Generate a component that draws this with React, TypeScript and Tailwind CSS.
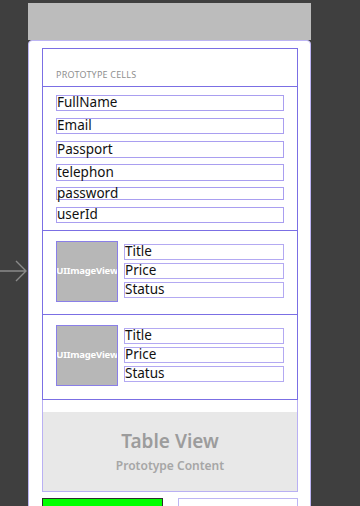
const fields = [
  { label: "FullName", mt: "mt-[8px]", h: "h-[16px]" },
  { label: "Email", mt: "mt-[7px]", h: "h-[16px]" },
  { label: "Passport", mt: "mt-[7px]", h: "h-[17px]" },
  { label: "telephon", mt: "mt-[6px]", h: "h-[17px]" },
  { label: "password", mt: "mt-[6px]", h: "h-[13px]" },
  { label: "userId", mt: "mt-[7px]", h: "h-[16px]" },
];

function ProductCell({ last }: { last?: boolean }) {
  return (
    <div
      className={
        last
          ? "flex h-[84px] items-start gap-[6px] pl-[13px] pt-[10px]"
          : "flex h-[84px] items-start gap-[6px] border-b border-[#7b6fe4] pl-[13px] pt-[10px]"
      }
    >
      <div className="flex h-[61px] w-[62px] items-center justify-center overflow-hidden border border-[#8a7fe8] bg-[#b7b7b7] text-[9.5px] font-bold tracking-[-0.2px] text-white">
        UIImageView
      </div>
      <div className="mt-[3px] flex flex-col gap-[3px]">
        {["Title", "Price", "Status"].map((t) => (
          <div
            key={t}
            className="flex h-[16px] w-[160px] items-center border border-[#b3a9f2] text-[13.5px] leading-none text-[#111]"
          >
            {t}
          </div>
        ))}
      </div>
    </div>
  );
}

export default function App() {
  return (
    <div
      className="flex h-[506px] w-[360px] overflow-hidden bg-[#3f3f3f]"
      style={{ fontFamily: '"Noto Sans", "Open Sans", sans-serif' }}
    >
      <div className="w-[28px] shrink-0 pt-[260px]">
        <svg width="28" height="22" viewBox="0 0 28 22" fill="none">
          <path d="M0 11H26M16 1L26 11L16 21" stroke="#8a8a8a" strokeWidth="1.4" />
        </svg>
      </div>

      <div className="flex h-[506px] w-[283px] shrink-0 flex-col overflow-hidden">
        <div className="mt-[3px] h-[37px] shrink-0 bg-[#bcbcbc]" />
        <div className="shrink-0 rounded-t-[4px] border border-[#bdb5f4] bg-white pb-[20px] pl-[13px] pt-[7px]">
          <div className="w-[256px] border border-[#7b6fe4]">
            <div className="flex h-[38px] items-end border-b border-[#7b6fe4] pb-[5px] pl-[13px] text-[9px] tracking-[0.2px] text-[#8f8f8f]">
              PROTOTYPE CELLS
            </div>
            <div className="flex h-[144px] flex-col border-b border-[#7b6fe4] pl-[13px]">
              {fields.map((f) => (
                <div
                  key={f.label}
                  className={`${f.mt} ${f.h} flex w-[228px] items-center border border-[#a99ef0] text-[13.5px] leading-none text-[#111]`}
                >
                  {f.label}
                </div>
              ))}
            </div>
            <ProductCell />
            <ProductCell last />
          </div>
          <div className="w-[256px] border-x border-b border-[#b9b0f3] pt-[12px]">
            <div className="flex h-[79px] flex-col items-center justify-center bg-[#e8e8e8]">
              <div className="text-[19px] font-semibold leading-none text-[#9c9c9c]">Table View</div>
              <div className="mt-[9px] text-[12px] font-semibold leading-none text-[#a6a6a6]">
                Prototype Content
              </div>
            </div>
          </div>
          <div className="mt-[6px] flex w-[256px] gap-[15px]">
            <div className="h-[20px] w-[121px] border border-[#2f2f2f] bg-[#00ff00]" />
            <div className="h-[20px] w-[120px] border border-[#bdb5f4] bg-white" />
          </div>
        </div>
      </div>
    </div>
  );
}
